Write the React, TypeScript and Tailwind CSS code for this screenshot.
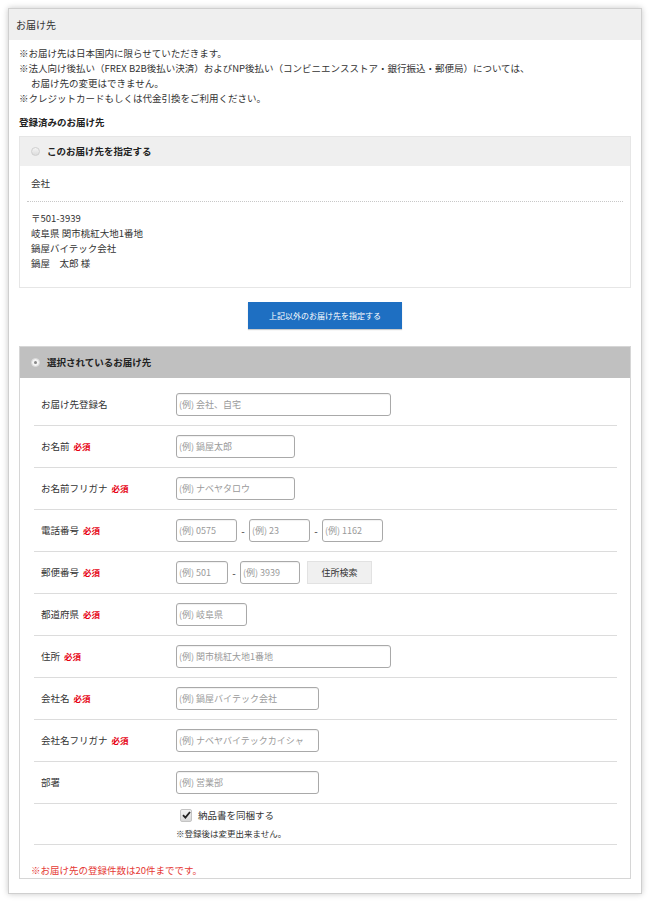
import React from 'react';

const font = { fontFamily: '"Noto Sans CJK JP", "Noto Sans", sans-serif' };

const Required = () => (
  <span className="ml-[4px] text-[8.5px] font-bold text-[#e60012]">必須</span>
);

const TextInput = ({ placeholder, width }: { placeholder: string; width: string }) => (
  <input
    type="text"
    placeholder={placeholder}
    className={`${width} h-[23px] rounded-[3px] border border-[#a9a9a9] bg-white px-[2px] text-[9px] text-[#333] outline-none shadow-[inset_0_1px_1px_rgba(0,0,0,0.06)] placeholder:text-[#9a9a9a]`}
  />
);

const Row = ({ label, required, children }: { label: string; required?: boolean; children: React.ReactNode }) => (
  <div className="flex h-[42px] items-center border-b border-[#dcdcdc] pl-[7px]">
    <div className="flex w-[135px] items-center text-[9.5px] text-[#333]">
      {label}
      {required && <Required />}
    </div>
    <div className="flex items-center">{children}</div>
  </div>
);

const Dash = () => <span className="w-[12px] text-center text-[10px] text-[#333]">-</span>;

export default function App() {
  return (
    <div className="min-h-[904px] bg-white p-[8px]" style={font}>
      <div className="border border-[#cfcfcf] bg-white pb-[14px] shadow-[0_0_6px_rgba(0,0,0,0.22)]">
        {/* header */}
        <div className="flex h-[31px] items-center bg-[#efefef] px-[7px] text-[10px] text-[#333]">お届け先</div>

        <div className="px-[10px] pt-[6px]">
          <div className="text-[9.5px] leading-[15px] text-[#333]">
            <p>※お届け先は日本国内に限らせていただきます。</p>
            <p>※法人向け後払い（FREX B2B後払い決済）およびNP後払い（コンビニエンスストア・銀行振込・郵便局）については、</p>
            <p className="pl-[12px]">お届け先の変更はできません。</p>
            <p>※クレジットカードもしくは代金引換をご利用ください。</p>
          </div>

          <p className="mt-[9px] mb-[6px] text-[9.5px] font-bold leading-[15px] text-[#222]">登録済みのお届け先</p>

          {/* registered address */}
          <div className="border border-[#e6e6e6]">
            <div className="flex h-[29px] items-center bg-[#efefef] pl-[11px]">
              <span className="mr-[7px] h-[9px] w-[9px] rounded-full border border-[#cfcfcf] bg-gradient-to-b from-[#f4f4f4] to-[#dcdcdc]" />
              <span className="text-[9.5px] font-bold text-[#222]">このお届け先を指定する</span>
            </div>
            <div className="px-[7px] pt-[10px] pb-[16px] text-[9.5px] leading-[15px] text-[#333]">
              <p className="px-[4px]">会社</p>
              <div className="mt-[10px] mb-[9px] border-b border-dotted border-[#c8c8c8]" />
              <div className="px-[4px]">
                <p>〒501-3939</p>
                <p>岐阜県 関市桃紅大地1番地</p>
                <p>鍋屋バイテック会社</p>
                <p>鍋屋　太郎 様</p>
              </div>
            </div>
          </div>

          <div className="mt-[14px] mb-[17px] flex justify-center">
            <button className="h-[27px] w-[154px] bg-[#1e6fc2] text-[8px] text-white shadow-[0_1px_1px_rgba(0,0,0,0.2)]">
              上記以外のお届け先を指定する
            </button>
          </div>

          {/* selected address form */}
          <div className="border border-[#d6d6d6]">
            <div className="flex h-[31px] items-center bg-[#c0c0c0] pl-[11px]">
              <span className="mr-[7px] flex h-[9px] w-[9px] items-center justify-center rounded-full border border-[#d8d8d8] bg-[#f4f4f4]">
                <span className="h-[3px] w-[3px] rounded-full bg-[#888]" />
              </span>
              <span className="text-[9.5px] font-bold text-[#222]">選択されているお届け先</span>
            </div>

            <div className="pl-[14px] pr-[13px] pt-[6px]">
              <Row label="お届け先登録名">
                <TextInput placeholder="(例) 会社、自宅" width="w-[215px]" />
              </Row>
              <Row label="お名前" required>
                <TextInput placeholder="(例) 鍋屋太郎" width="w-[119px]" />
              </Row>
              <Row label="お名前フリガナ" required>
                <TextInput placeholder="(例) ナベヤタロウ" width="w-[119px]" />
              </Row>
              <Row label="電話番号" required>
                <TextInput placeholder="(例) 0575" width="w-[61px]" />
                <Dash />
                <TextInput placeholder="(例) 23" width="w-[61px]" />
                <Dash />
                <TextInput placeholder="(例) 1162" width="w-[61px]" />
              </Row>
              <Row label="郵便番号" required>
                <TextInput placeholder="(例) 501" width="w-[52px]" />
                <Dash />
                <TextInput placeholder="(例) 3939" width="w-[60px]" />
                <button className="ml-[7px] h-[23px] w-[65px] border border-[#e2e2e2] bg-[#f0f0f0] text-[9px] text-[#333]">
                  住所検索
                </button>
              </Row>
              <Row label="都道府県" required>
                <TextInput placeholder="(例) 岐阜県" width="w-[71px]" />
              </Row>
              <Row label="住所" required>
                <TextInput placeholder="(例) 関市桃紅大地1番地" width="w-[215px]" />
              </Row>
              <Row label="会社名" required>
                <TextInput placeholder="(例) 鍋屋バイテック会社" width="w-[143px]" />
              </Row>
              <Row label="会社名フリガナ" required>
                <TextInput placeholder="(例) ナベヤバイテックカイシャ" width="w-[143px]" />
              </Row>
              <Row label="部署">
                <TextInput placeholder="(例) 営業部" width="w-[143px]" />
              </Row>

              <div className="border-b border-[#dcdcdc] pl-[142px] pt-[3px] pb-[4px]">
                <label className="flex h-[16px] items-center pl-[4px]">
                  <span className="mr-[6px] flex h-[13px] w-[12px] items-center justify-center rounded-[2px] border border-[#c4c4c4] bg-gradient-to-b from-[#f2f2f2] to-[#d8d8d8]">
                    <svg width="9" height="8" viewBox="0 0 9 8">
                      <path d="M1 4.2 L3.4 6.6 L8 1" fill="none" stroke="#222" strokeWidth="1.8" />
                    </svg>
                  </span>
                  <span className="text-[9.5px] text-[#333]">納品書を同梱する</span>
                </label>
                <p className="mt-[3px] text-[8.5px] leading-[14px] text-[#333]">※登録後は変更出来ません。</p>
              </div>

              <p className="mt-[18px] -ml-[3px] text-[9.5px] leading-[15px] text-[#e53935]">※お届け先の登録件数は20件までです。</p>
            </div>
          </div>
        </div>
      </div>
    </div>
  );
}
